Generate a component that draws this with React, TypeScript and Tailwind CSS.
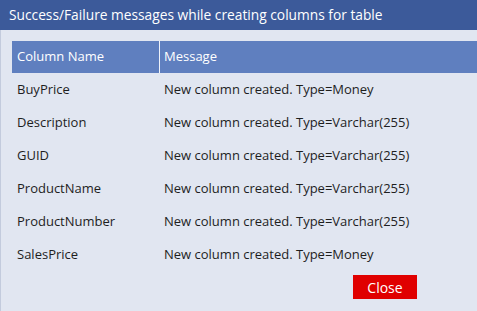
import React from "react";

const rows: [string, string][] = [
  ["BuyPrice", "New column created. Type=Money"],
  ["Description", "New column created. Type=Varchar(255)"],
  ["GUID", "New column created. Type=Varchar(255)"],
  ["ProductName", "New column created. Type=Varchar(255)"],
  ["ProductNumber", "New column created. Type=Varchar(255)"],
  ["SalesPrice", "New column created. Type=Money"],
];

export default function App() {
  return (
    <div
      className="w-[477px] h-[311px] overflow-hidden bg-[#e1e6f1] flex flex-col"
      style={{ fontFamily: '"Open Sans", "Noto Sans", sans-serif' }}
    >
      <div className="h-[30px] shrink-0 bg-[#3c5a9a] text-white text-[13.75px] flex items-center pl-[9px] whitespace-nowrap">
        Success/Failure messages while creating columns for table
      </div>
      <div className="flex-1 flex border-l border-[#c3cbdd]">
        <div className="flex-1 flex flex-col pt-[11px] pl-[11px]">
          <div className="flex h-[32px] bg-[#5f7fbf] text-white text-[13px] items-center">
            <div className="w-[148px] pl-[5px] border-r border-[#eef2fa] h-full flex items-center">
              Column Name
            </div>
            <div className="pl-[4px]">Message</div>
          </div>
          {rows.map(([n, m]) => (
            <div key={n} className="flex h-[33px] pt-[1px] items-center text-[13px] text-[#1e1e1e]">
              <div className="w-[148px] pl-[5px] whitespace-nowrap">{n}</div>
              <div className="pl-[4px] whitespace-nowrap">{m}</div>
            </div>
          ))}
          <div className="flex justify-end pr-[60px] mt-[4px]">
            <button className="w-[64px] h-[24px] bg-[#e00000] text-white text-[14px] flex items-center justify-center">
              Close
            </button>
          </div>
        </div>
      </div>
    </div>
  );
}
